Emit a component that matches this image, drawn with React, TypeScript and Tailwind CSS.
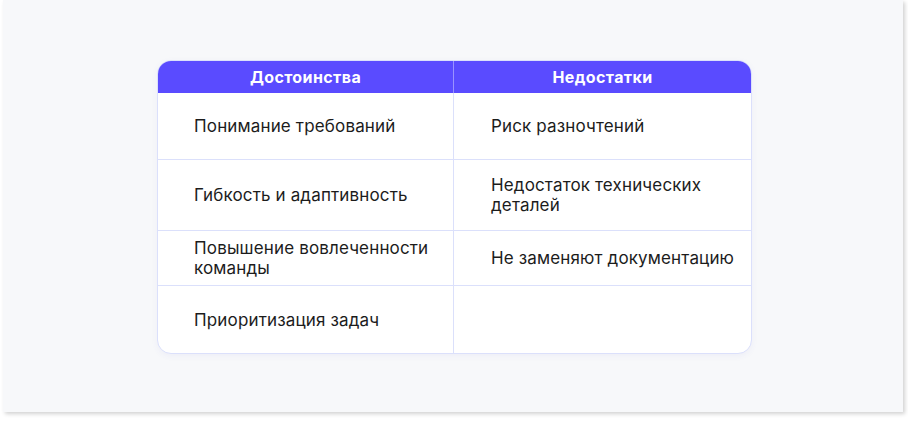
const rows: { left: string; right: string; h: string }[] = [
  { left: "Понимание требований", right: "Риск разночтений", h: "h-[66px]" },
  { left: "Гибкость и адаптивность", right: "Недостаток технических деталей", h: "h-[71px]" },
  { left: "Повышение вовлеченности команды", right: "Не заменяют документацию", h: "h-[55px]" },
  { left: "Приоритизация задач", right: "", h: "h-[68px]" },
];

export default function App() {
  return (
    <div className="w-[908px] h-[421px] bg-white">
      <div className="ml-[3px] w-[900px] h-[412px] bg-[#f7f8fa] shadow-[2px_2px_4px_rgba(0,0,0,0.18)] pt-[60px] pl-[154px] font-['Inter',sans-serif]">
        <div className="w-[595px] rounded-[14px] border border-[#dbe0fb] bg-white overflow-hidden shadow-[0_2px_6px_rgba(90,80,200,0.06)]">
          <div className="grid grid-cols-[296px_1fr] h-[32px] bg-[#5a4bff] text-white text-[16px] tracking-[0.4px] font-bold">
            <div className="flex items-center justify-center border-r border-[#9a92ff]">Достоинства</div>
            <div className="flex items-center justify-center">Недостатки</div>
          </div>
          {rows.map((r, i) => (
            <div
              key={i}
              className={`grid grid-cols-[296px_1fr] ${r.h} ${i > 0 ? "border-t border-[#dbe0fb]" : ""} text-[17px] tracking-[0.15px] leading-[20px] text-[#1c1c1c]`}
            >
              <div className="flex items-center pl-[36px] pr-[10px] border-r border-[#dbe0fb]">{r.left}</div>
              <div className="flex items-center pl-[37px] pr-[10px]">{r.right}</div>
            </div>
          ))}
        </div>
      </div>
    </div>
  );
}
